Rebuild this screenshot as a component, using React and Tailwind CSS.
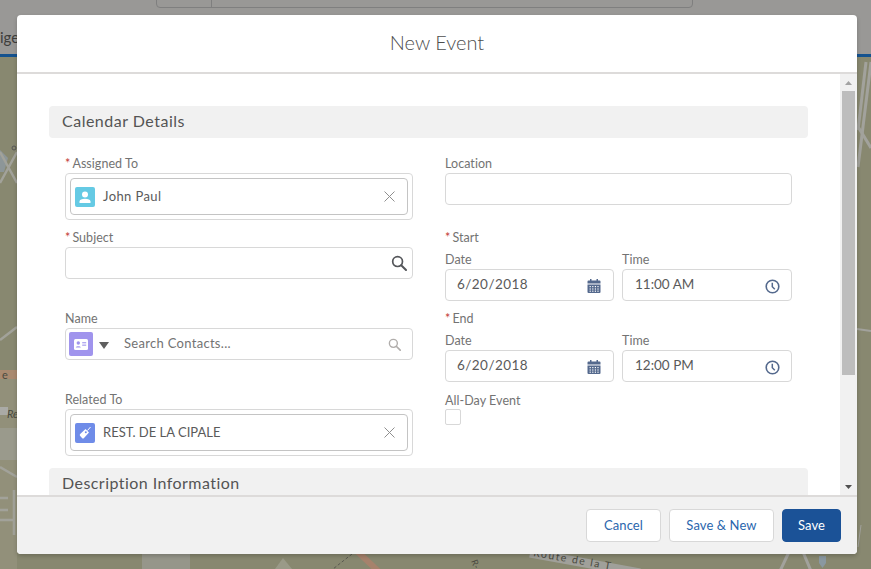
import React from "react";

const F = { fontFamily: '"Lato", "Open Sans", sans-serif' };

function Star() {
  return <span className="text-[#c23934] mr-[2px]">*</span>;
}

function Label({ req, children, cls = "" }) {
  return (
    <div className={`h-[18px] pt-[1px] text-[12.5px] leading-[18px] tracking-[0.05px] text-[#737373] ${cls}`}>
      {req && <Star />}
      {children}
    </div>
  );
}

function X() {
  return (
    <svg width="11" height="11" viewBox="0 0 11 11" className="shrink-0 -mt-[1px]">
      <path d="M0.5 0.5 L10.5 10.5 M10.5 0.5 L0.5 10.5" stroke="#8f8f8f" strokeWidth="1" fill="none" />
    </svg>
  );
}

function Search({ color, size }) {
  return (
    <svg width={size} height={size} viewBox="0 0 16 16">
      <circle cx="6.6" cy="6.6" r="4.9" stroke={color} strokeWidth="1.7" fill="none" />
      <path d="M10.2 10.2 L15 15" stroke={color} strokeWidth="2" strokeLinecap="round" />
    </svg>
  );
}

function Cal() {
  return (
    <svg width="14" height="14" viewBox="0 0 14 14" className="shrink-0">
      <path d="M0.5 5.5 H13.5 V13 a1 1 0 0 1 -1 1 H1.5 a1 1 0 0 1 -1 -1 Z" fill="#54698d" />
      <path d="M1.5 1.5 H12.5 a1 1 0 0 1 1 1 V4.6 H0.5 V2.5 a1 1 0 0 1 1 -1 Z" fill="#54698d" />
      <rect x="3" y="0" width="1.5" height="2" fill="#54698d" />
      <rect x="9.5" y="0" width="1.5" height="2" fill="#54698d" />
      {[2.6, 5.2, 7.8, 10.4].map((x) =>
        [7, 9.4, 11.6].map((y) => (
          <rect key={`${x}-${y}`} x={x} y={y} width="1.2" height="1.2" fill="#fff" />
        ))
      )}
    </svg>
  );
}

function Clock() {
  return (
    <svg width="15" height="15" viewBox="0 0 15 15" className="shrink-0">
      <circle cx="7.5" cy="7.5" r="6.3" stroke="#54698d" strokeWidth="1.6" fill="none" />
      <path d="M7.3 3.8 V7.8 L9.8 10.2" stroke="#54698d" strokeWidth="1.5" fill="none" />
    </svg>
  );
}

function Pill({ iconBg, icon, text, textCls = "" }) {
  return (
    <div className="rounded-[4px] border border-[#d8d8d8] p-1 h-[47px] bg-white">
      <div className="h-[37px] rounded-[4px] border border-[#c4c4c4] flex items-center pl-[4px] pr-[12px]">
        <div className={`w-5 h-5 rounded-[2px] flex items-center justify-center shrink-0 ${iconBg}`}>{icon}</div>
        <span className={`ml-2 text-[13px] text-[#5a5a5a] flex-1 ${textCls}`}>{text}</span>
        <X />
      </div>
    </div>
  );
}

function DateTime({ label, date, time }) {
  return (
    <div>
      <Label req>{label}</Label>
      <div className="flex gap-2 mt-1">
        <div className="w-[169px]">
          <Label>Date</Label>
          <div className="mt-[1px] h-8 rounded-[4px] border border-[#d8d8d8] flex items-center pl-[11px] pr-[12px]">
            <span className="flex-1 text-[13.5px] tracking-[0.45px] text-[#5a5a5a] -mt-[1px]">{date}</span>
            <span className="mt-[2px]"><Cal /></span>
          </div>
        </div>
        <div className="w-[170px]">
          <Label>Time</Label>
          <div className="mt-[1px] h-8 rounded-[4px] border border-[#d8d8d8] flex items-center pl-3 pr-[11px]">
            <span className="flex-1 text-[13.5px] text-[#5a5a5a] -mt-[1px]">{time}</span>
            <span className="mt-[2px]"><Clock /></span>
          </div>
        </div>
      </div>
    </div>
  );
}

function Btn({ children, primary, w }) {
  return (
    <button
      className={`h-[33px] rounded-[4px] text-[13px] font-normal tracking-[0.1px] ${w} ${
        primary
          ? "bg-[#1b5297] text-white border border-[#1b5297]"
          : "bg-white text-[#2a66ad] border border-[#d8d8d8]"
      }`}
    >
      {children}
    </button>
  );
}

function MapBg() {
  return (
    <svg width="871" height="512" viewBox="0 57 871 512" className="block">
      <rect x="0" y="57" width="871" height="512" fill="#888870" />
      {/* left strip */}
      <rect x="0" y="379" width="17" height="190" fill="#92907a" />
      <rect x="0" y="428" width="17" height="32" fill="#9a9a8c" />
      <path d="M0 150 L8 158 L4 172 L0 172 Z" fill="#8d9698" />
      <g stroke="#a2a29a" strokeWidth="2.5" fill="none">
        <path d="M0 152 L17 183 M17 152 L0 183" />
        <path d="M0 340 L17 327" />
        <path d="M0 467 L17 477" />
        <path d="M0 498 H8 M0 510 H8 M14 490 V535 M0 520 H15" />
      </g>
      <rect x="0" y="370" width="17" height="9" fill="#a98a70" />
      <rect x="0" y="407" width="8" height="8" fill="#aaaaa6" />
      <circle cx="14" cy="148" r="2" fill="none" stroke="#555" strokeWidth="1" />
      <text x="2" y="379" fontSize="11" fill="#4a4a40">e</text>
      <text x="7" y="418" fontSize="11" fontStyle="italic" fill="#4a4a40">Re</text>
      {/* right strip */}
      <g stroke="#a2a29c" fill="none">
        <path d="M871 62 L858 167" strokeWidth="3" />
        <path d="M866 62 L858 130" strokeWidth="3" />
        <path d="M857 125 L871 148" strokeWidth="3" />
        <path d="M857 329 L871 331" strokeWidth="2" />
        <path d="M861 525 L858 547" strokeWidth="1" />
      </g>
      {/* bottom strip */}
      <rect x="142" y="554" width="48" height="15" fill="#96968a" />
      <path d="M275 569 L283 558 L292 569 Z" fill="#9a9a88" />
      <path d="M358 552 L378 571" stroke="#a6826c" strokeWidth="6" fill="none" />
      <path d="M352 554 L333 569" stroke="#5a5a50" strokeWidth="1" strokeDasharray="3 2" fill="none" />
      <path d="M530 553 L640 573" stroke="#a0a09a" strokeWidth="9" fill="none" />
      <text x="533" y="556" fontSize="10.5" letterSpacing="1.5" fill="#4a4a40" transform="rotate(10 533 556)">Route de la T</text>
      <text x="471" y="561" fontSize="9" fill="#4a4a40" transform="rotate(70 471 561)">R-</text>
      <path d="M789 552 L780 571 M803 552 L811 571" stroke="#a2a29c" strokeWidth="3" fill="none" />
      <path d="M819 556 h7 v7 l-3.5 5 l-3.5 -5 Z" fill="#8a98a0" />
    </svg>
  );
}

export default function App() {
  return (
    <div className="relative w-[871px] h-[569px] overflow-hidden bg-[#999896]" style={F}>
      {/* page behind */}
      <div className="h-[54px] relative">
        <div className="absolute left-[156px] -top-[1px] w-[537px] h-[9px] border border-[#7f7f7f] rounded-b-[4px] flex">
          <div className="w-[55px] border-r border-[#7f7f7f]" />
        </div>
        <span className="absolute left-0 top-[26px] text-[15px] text-[#3e3e3c]">ige</span>
      </div>
      <div className="h-[3px] bg-[#14528f]" />
      <MapBg />

      {/* modal */}
      <div className="absolute left-[17px] top-[15px] w-[840px] h-[539px] bg-white rounded-[4px] flex flex-col overflow-hidden shadow-[0_2px_4px_rgba(0,0,0,0.2)]">
        <div className="h-[59px] shrink-0 border-b-2 border-[#dddbda] flex items-center justify-center">
          <span className="text-[20px] font-light text-[#4e4e4e] -mt-[3px]">New Event</span>
        </div>

        <div className="flex-1 flex min-h-0">
          <div className="flex-1 min-w-0 overflow-hidden pl-[32px] pr-[32px] pt-[32px]">
            <div className="w-[759px] h-8 rounded-[4px] bg-[#f1f1f1] flex items-center pl-[13px] pb-[2px] text-[16px] tracking-[0.5px] text-[#545454]">
              Calendar Details
            </div>

            <div className="grid grid-cols-[348px_347px] gap-x-[32px] pl-[16px] mt-4">
              <div>
                <Label req>Assigned To</Label>
                <div className="mt-[1px]">
                  <Pill
                    iconBg="bg-[#65cae4]"
                    text="John Paul"
                    textCls="tracking-[0.4px]"
                    icon={
                      <svg width="14" height="14" viewBox="0 0 14 14">
                        <circle cx="7" cy="4.6" r="3" fill="#fff" />
                        <path d="M1.5 13 V11.4 C1.5 9.6 4 8.8 7 8.8 C10 8.8 12.5 9.6 12.5 11.4 V13 Z" fill="#fff" />
                      </svg>
                    }
                  />
                </div>

                <Label req cls="mt-2">Subject</Label>
                <div className="mt-[1px] h-8 rounded-[4px] border border-[#d8d8d8] flex items-center justify-end pr-[5px]">
                  <Search color="#54565a" size={16} />
                </div>

                <Label cls="mt-[30px]">Name</Label>
                <div className="mt-[1px] h-8 rounded-[4px] border border-[#d8d8d8] flex items-center pl-[3px] pr-[11px]">
                  <div className="w-6 h-6 rounded-[2px] bg-[#a094ed] flex items-center justify-center shrink-0">
                    <svg width="14" height="11" viewBox="0 0 14 11">
                      <rect width="14" height="11" rx="1.5" fill="#fff" />
                      <circle cx="4.3" cy="4" r="1.7" fill="#a094ed" />
                      <path d="M1.8 8.6 C1.8 6.8 6.8 6.8 6.8 8.6 Z" fill="#a094ed" />
                      <rect x="8.2" y="3.2" width="4" height="1.1" fill="#a094ed" />
                      <rect x="8.2" y="5.6" width="4" height="1.1" fill="#a094ed" />
                    </svg>
                  </div>
                  <svg width="10" height="7" viewBox="0 0 10 7" className="ml-[6px] mt-[2px] shrink-0">
                    <path d="M0 0 H10 L5 7 Z" fill="#5f5f5f" />
                  </svg>
                  <span className="ml-[15px] -mt-[1px] flex-1 text-[13px] tracking-[0.3px] text-[#737373]">Search Contacts...</span>
                  <Search color="#b0adab" size={13} />
                </div>

                <Label cls="mt-[30px]">Related To</Label>
                <div className="mt-[1px]">
                  <Pill
                    iconBg="bg-[#6f8ce8]"
                    text="REST. DE LA CIPALE"
                    icon={
                      <svg width="14" height="14" viewBox="0 0 14 14">
                        <path d="M7.5 3 L11 6.5 L6 12 a1.4 1.4 0 0 1 -2 0 L2.2 10 a1.4 1.4 0 0 1 0 -2 Z" fill="#fff" />
                        <circle cx="7.8" cy="6.2" r="1" fill="#6f8ce8" />
                        <path d="M9.5 4.5 L12.5 1" stroke="#fff" strokeWidth="1" />
                      </svg>
                    }
                  />
                </div>
              </div>

              <div>
                <Label>Location</Label>
                <div className="mt-[1px] h-8 rounded-[4px] border border-[#d8d8d8]" />
                <div className="mt-[23px]">
                  <DateTime label="Start" date="6/20/2018" time="11:00 AM" />
                </div>
                <div className="mt-2">
                  <DateTime label="End" date="6/20/2018" time="12:00 PM" />
                </div>
                <Label cls="mt-[9px]">All-Day Event</Label>
                <div className="w-4 h-4 rounded-[2px] border border-[#d8d8d8]" />
              </div>
            </div>

            <div className="w-[759px] h-8 mt-3 rounded-[4px] bg-[#f1f1f1] flex items-center pl-[13px] pb-[2px] text-[16px] tracking-[0.45px] text-[#545454]">
              Description Information
            </div>
          </div>

          {/* scrollbar */}
          <div className="w-[17px] shrink-0 bg-[#f1f1f1] flex flex-col items-center">
            <div className="h-[17px] w-full flex items-center justify-center">
              <svg width="7" height="4" viewBox="0 0 7 4"><path d="M3.5 0 L7 4 H0 Z" fill="#a3a3a3" /></svg>
            </div>
            <div className="w-[13px] h-[284px] bg-[#bdbdbd]" />
            <div className="flex-1" />
            <div className="h-[17px] w-full flex items-center justify-center">
              <svg width="7" height="4" viewBox="0 0 7 4"><path d="M3.5 4 L7 0 H0 Z" fill="#505050" /></svg>
            </div>
          </div>
        </div>

        <div className="h-[59px] shrink-0 border-t-2 border-[#dddbda] bg-[#f1f1f1] flex items-center justify-end gap-2 pr-[16px]">
          <Btn w="w-[75px]">Cancel</Btn>
          <Btn w="w-[105px]">Save &amp; New</Btn>
          <Btn w="w-[59px]" primary>Save</Btn>
        </div>
      </div>
    </div>
  );
}
